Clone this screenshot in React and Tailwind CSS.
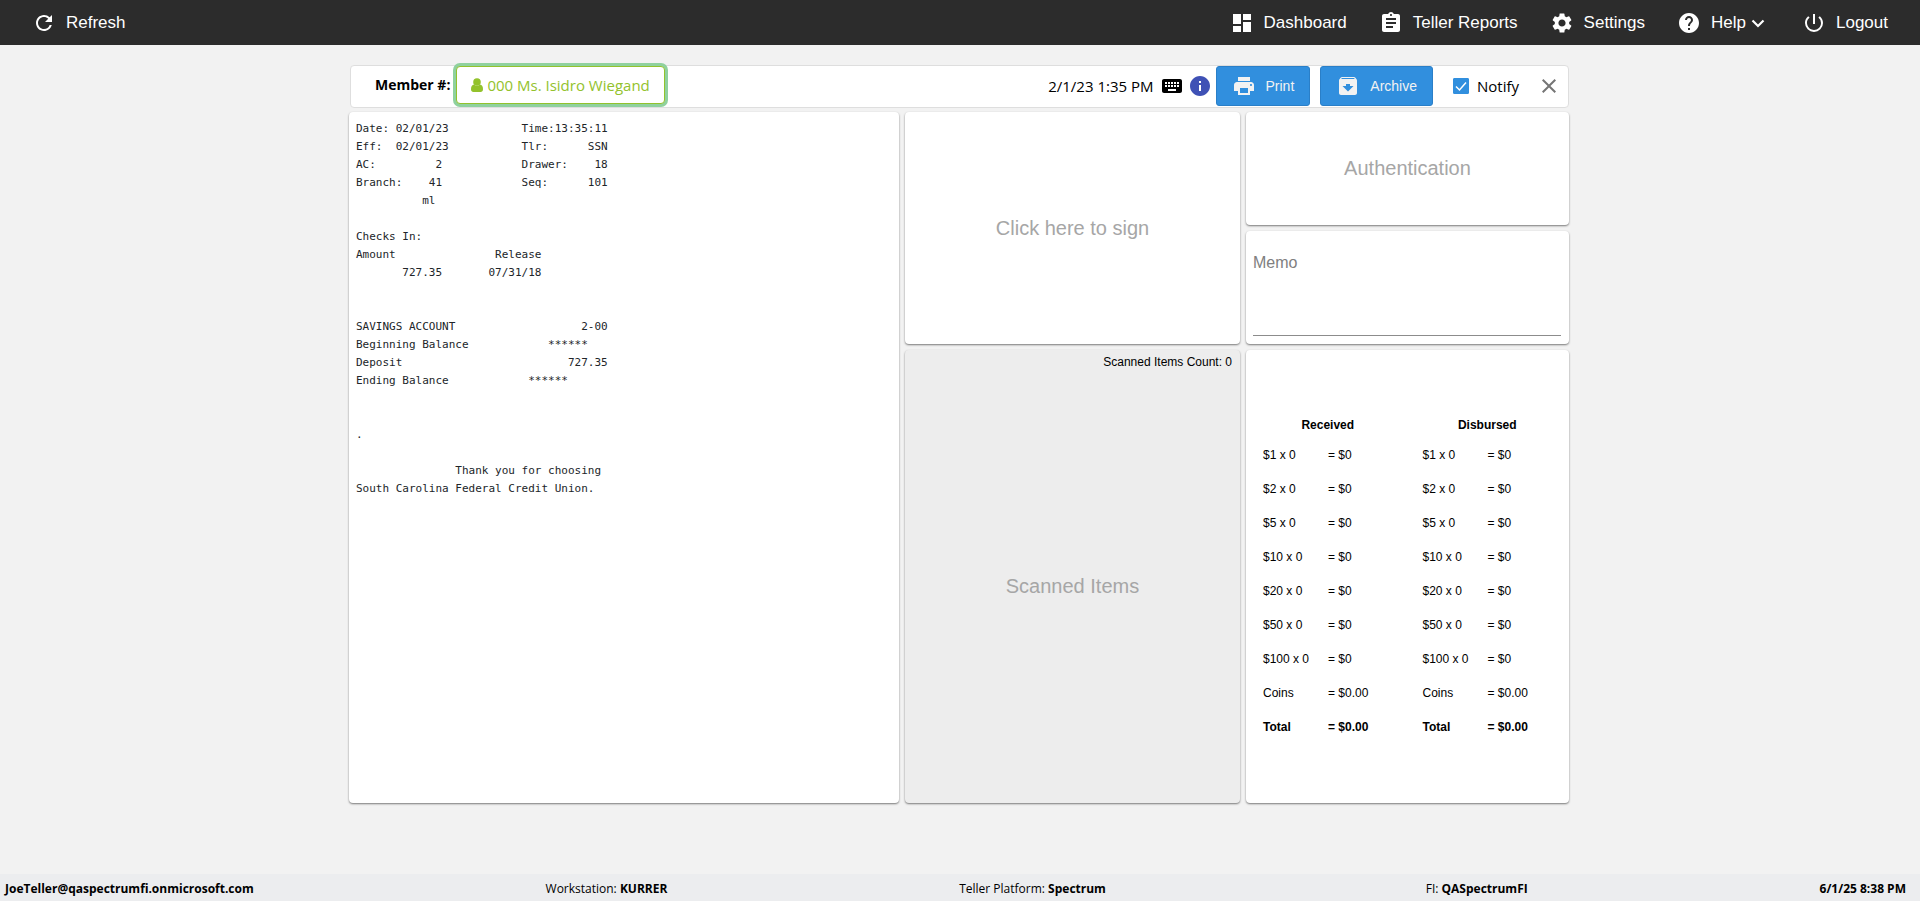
import React, { useState } from "react";
import {
  MdArchive,
  MdAssignment,
  MdClose,
  MdDashboard,
  MdHelp,
  MdInfo,
  MdKeyboard,
  MdPowerSettingsNew,
  MdPrint,
  MdRefresh,
  MdSettings,
} from "react-icons/md";

const receipt = `Date: 02/01/23           Time:13:35:11
Eff:  02/01/23           Tlr:      SSN
AC:         2            Drawer:    18
Branch:    41            Seq:      101
          ml

Checks In:
Amount               Release
       727.35       07/31/18


SAVINGS ACCOUNT                   2-00
Beginning Balance            ******
Deposit                         727.35
Ending Balance            ******


.

               Thank you for choosing
South Carolina Federal Credit Union.`;

const cashRows = [
  ["$1 x 0", "= $0"],
  ["$2 x 0", "= $0"],
  ["$5 x 0", "= $0"],
  ["$10 x 0", "= $0"],
  ["$20 x 0", "= $0"],
  ["$50 x 0", "= $0"],
  ["$100 x 0", "= $0"],
  ["Coins", "= $0.00"],
];

const cardShadow = "rounded-sm shadow-[0_1px_2px_rgba(0,0,0,0.5)]";

const NavButton = ({ icon: Icon, label, children }) => (
  <button className="flex h-full items-center px-4 cursor-pointer hover:bg-[#3d3d3d]">
    <Icon className="mr-2.5 h-6 w-6" />
    {label}
    {children}
  </button>
);

const NavBar = () => (
  <nav className="flex h-[45px] items-center justify-between bg-[#2c2c2c] px-4 text-[17px] text-white">
    <NavButton icon={MdRefresh} label="Refresh" />
    <div className="flex h-full items-center">
      <NavButton icon={MdDashboard} label="Dashboard" />
      <NavButton icon={MdAssignment} label="Teller Reports" />
      <NavButton icon={MdSettings} label="Settings" />
      <NavButton icon={MdHelp} label="Help">
        <svg viewBox="0 0 24 24" className="h-6 w-6" fill="none" stroke="currentColor" strokeWidth="2.2">
          <path d="M6.5 9.5l5.5 5.5 5.5-5.5" />
        </svg>
      </NavButton>
      <NavButton icon={MdPowerSettingsNew} label="Logout" />
    </div>
  </nav>
);

const ActionButton = ({ icon: Icon, label }) => (
  <button className="flex h-10 items-center rounded-[3px] border border-[#2a7fc8] bg-[#318fde] px-[15px] text-sm text-[#f2f2f2] cursor-pointer hover:bg-[#2a7fc8]">
    <Icon className="mr-2.5 h-6 w-6" />
    {label}
  </button>
);

const MemberBar = () => {
  const [notify, setNotify] = useState(true);

  return (
    <div className="ml-px flex items-start justify-between rounded-sm border border-[#dedede] bg-white pb-px pl-6 pr-[7px] font-['Open_Sans',sans-serif] text-[15px] text-black">
      <div className="flex items-center">
        <span className="mr-1.5 text-sm font-bold">Member #:</span>
        <button className="flex h-[38px] items-center rounded-sm border border-[#93c22c] bg-white px-3.5 text-[#93c22c] ring-3 ring-[#8fd19e] cursor-pointer">
          <svg viewBox="0 0 12 14" className="mr-1 h-3.5 w-3" fill="currentColor">
            <circle cx="6" cy="4" r="3.8" />
            <path d="M3 6.6C1 6.8 0 8.6 0 11.200c0 1.700 1 2.800 2.400 2.800h7.200c1.400 0 2.400-1.100 2.400-2.800 0-2.600-1-4.400-3-4.600-.8.800-1.800 1.200-3 1.200s-2.200-.4-3-1.200z" />
          </svg>
          000 Ms. Isidro Wiegand
        </button>
      </div>
      <div className="flex items-center">
        <span>2/1/23 1:35 PM</span>
        <MdKeyboard className="ml-1.5 h-6 w-6" />
        <MdInfo className="mx-1 h-6 w-6 text-[#3f51b5]" />
        <div className="flex gap-2.5 font-['Liberation_Sans',Arial,sans-serif]">
          <ActionButton icon={MdPrint} label="Print" />
          <ActionButton icon={MdArchive} label="Archive" />
        </div>
        <label className="ml-5 flex items-center gap-2 cursor-pointer">
          <span className="grid">
            <input
              type="checkbox"
              checked={notify}
              onChange={() => setNotify(!notify)}
              className="peer col-start-1 row-start-1 h-4 w-4 appearance-none rounded-[1px] border border-[#318fde] checked:bg-[#318fde]"
            />
            <svg viewBox="0 0 16 16" className="pointer-events-none invisible col-start-1 row-start-1 h-4 w-4 peer-checked:visible" fill="none" stroke="white" strokeWidth="1.5">
              <path d="M3 8.5l3.5 3.5L13 4.5" />
            </svg>
          </span>
          Notify
        </label>
        <button aria-label="Close" className="ml-[18px] cursor-pointer text-[#757575]">
          <MdClose className="h-6 w-6" />
        </button>
      </div>
    </div>
  );
};

const CashTable = ({ title }) => (
  <table className="w-full text-left text-xs text-black">
    <thead>
      <tr className="h-[26px]">
        <th colSpan={2} className="text-center font-bold">{title}</th>
      </tr>
    </thead>
    <tbody>
      {cashRows.map(([label, value]) => (
        <tr key={label} className="h-[34px]">
          <td className="w-20 pl-[15px]">{label}</td>
          <td>{value}</td>
        </tr>
      ))}
      <tr className="h-[34px] font-bold">
        <td className="w-20 pl-[15px]">Total</td>
        <td>= $0.00</td>
      </tr>
    </tbody>
  </table>
);

const Footer = () => (
  <footer className="flex h-[27px] items-center justify-between bg-[#ecedef] pt-0.5 pl-[5px] pr-3.5 font-['Open_Sans',sans-serif] text-xs text-black">
    <b>JoeTeller@qaspectrumfi.onmicrosoft.com</b>
    <span>Workstation: <b>KURRER</b></span>
    <span className="pr-7">Teller Platform: <b>Spectrum</b></span>
    <span>FI: <b>QASpectrumFI</b></span>
    <b>6/1/25 8:38 PM</b>
  </footer>
);

const App = () => {
  const [memo, setMemo] = useState("");

  return (
    <div className="flex min-h-screen flex-col bg-[#f2f2f2] font-['Liberation_Sans',Arial,sans-serif]">
      <NavBar />
      <main className="mx-auto w-full max-w-[1222px] flex-1 pr-0.5 pt-5 pb-16">
        <MemberBar />
        <div className="mt-1 grid grid-cols-[550fr_335fr_323fr] gap-1.5">
          {/* Receipt */}
          <section className={`${cardShadow} min-h-[691px] bg-white p-[7px] pt-2`}>
            <pre className="font-['DejaVu_Sans_Mono',monospace] text-[11px] leading-[18px] text-[#212529]">{receipt}</pre>
          </section>

          {/* Signature and scanned items */}
          <div className="flex flex-col gap-1.5">
            <button className={`${cardShadow} h-[232px] bg-white text-xl text-[#a6a6a6] cursor-pointer`}>
              Click here to sign
            </button>
            <section className={`${cardShadow} flex flex-1 flex-col bg-[#ededed]`}>
              <div className="px-2 pt-1 text-right text-xs text-black">Scanned Items Count: 0</div>
              <div className="flex flex-1 items-center justify-center pb-0.5 text-xl text-[#a6a6a6]">Scanned Items</div>
            </section>
          </div>

          {/* Authentication, memo and cash */}
          <div className="flex flex-col gap-1.5">
            <button className={`${cardShadow} h-[113px] bg-white pb-0.5 text-xl text-[#a6a6a6] cursor-pointer`}>
              Authentication
            </button>
            <section className={`${cardShadow} h-[113px] bg-white pl-[7px] pr-2 pt-5 pb-2`}>
              <textarea
                aria-label="Memo"
                placeholder="Memo"
                value={memo}
                onChange={(e) => setMemo(e.target.value)}
                className="block h-full w-full resize-none border-b border-[#8c8c8c] text-base text-black outline-none placeholder:text-[#808080]"
              />
            </section>
            <section className={`${cardShadow} grid flex-1 grid-cols-2 content-start bg-white px-0.5 pt-[62px]`}>
              <CashTable title="Received" />
              <CashTable title="Disbursed" />
            </section>
          </div>
        </div>
      </main>
      <Footer />
    </div>
  );
};

export default App;
